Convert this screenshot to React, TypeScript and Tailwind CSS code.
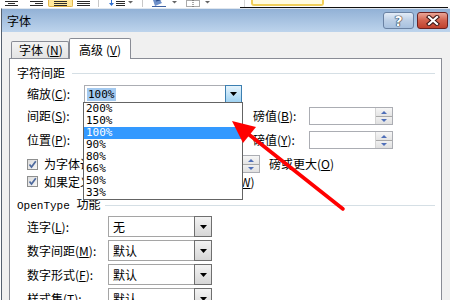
import React from "react";

function Tri({ up, color = "#000", w = 7, h = 4 }: { up?: boolean; color?: string; w?: number; h?: number }) {
  return (
    <svg width={w} height={h} viewBox={`0 0 ${w} ${h}`}>
      {up ? (
        <polygon points={`0,${h} ${w / 2},0 ${w},${h}`} fill={color} />
      ) : (
        <polygon points={`0,0 ${w},0 ${w / 2},${h}`} fill={color} />
      )}
    </svg>
  );
}

function LinesIcon({ v }: { v: number }) {
  const rows =
    v === 0
      ? [
          [0, 13],
          [3, 7],
          [0, 13],
        ]
      : v === 1
      ? [
          [0, 13],
          [5, 8],
          [0, 13],
        ]
      : [
          [0, 13],
          [0, 13],
          [0, 13],
        ];
  return (
    <svg width={13} height={7}>
      {rows.map((r, i) => (
        <rect key={i} x={r[0]} y={i * 2 + 1} width={r[1]} height={1} fill="#2b2b2b" />
      ))}
    </svg>
  );
}

function Toolbar() {
  return (
    <>
      <div className="h-[7px] flex items-start bg-white">
        <div className="ml-[5px]">
          <LinesIcon v={0} />
        </div>
        <div className="ml-[12px]">
          <LinesIcon v={1} />
        </div>
        <div className="ml-[5px] w-[25px] h-[7px] border-x border-b border-[#e2b64c] bg-[#ffe89a] rounded-b-[2px] flex justify-center">
          <svg width={13} height={6}>
            <rect x={0} y={1} width={13} height={1} fill="#2b2b2b" />
            <rect x={0} y={3} width={13} height={1} fill="#2b2b2b" />
            <rect x={0} y={5} width={13} height={1} fill="#2b2b2b" />
          </svg>
        </div>
        <div className="ml-[4px]">
          <LinesIcon v={2} />
        </div>
        <div className="ml-[8px] w-[1px] h-[7px] bg-[#c8c8c8]" />
        <div className="ml-[9px]">
          <svg width={26} height={7}>
            <rect x={3} y={0} width={1} height={5} fill="#2f6fd0" />
            <polygon points="1,3 6,3 3.5,6" fill="#2f6fd0" />
            <rect x={8} y={1} width={9} height={1} fill="#2b2b2b" />
            <rect x={8} y={3} width={9} height={1} fill="#2b2b2b" />
            <rect x={8} y={5} width={9} height={1} fill="#2b2b2b" />
            <polygon points="20,1 25,1 22.5,3.5" fill="#666" />
          </svg>
        </div>
        <div className="ml-[8px] w-[1px] h-[7px] bg-[#c8c8c8]" />
        <div className="ml-[7px]">
          <svg width={28} height={7}>
            <path d="M3 0 L10 0 L12 3 L5 6 Z" fill="#6d8fc9" />
            <path d="M6 1 L13 -1" stroke="#2a4c8c" strokeWidth={1.2} />
            <rect x={2} y={6} width={14} height={1} fill="#3c5fa0" />
            <polygon points="22,1 27,1 24.5,3.5" fill="#666" />
          </svg>
        </div>
        <div className="ml-[8px]">
          <svg width={25} height={7}>
            <rect x={0.5} y={0.5} width={13} height={6} fill="none" stroke="#555" strokeDasharray="1 1" />
            <line x1={7} y1={0} x2={7} y2={7} stroke="#555" strokeDasharray="1 1" />
            <polygon points="19,1 24,1 21.5,3.5" fill="#666" />
          </svg>
        </div>
        <div className="ml-[33px] w-[1px] h-[7px] bg-[#d5d5d5]" />
        <div className="ml-[6px] w-[73px] h-[6px] border-x-2 border-b-2 border-[#f0cf5a] bg-[#fffbe0] rounded-b-[3px]" />
      </div>
      <div className="h-[1px] flex">
        <div className="w-[240px]" />
        <div className="w-[208px] bg-[#111]" />
      </div>
    </>
  );
}

function Checkbox() {
  return (
    <div className="w-[11px] h-[11px] border border-[#8e8f8f] bg-gradient-to-br from-[#dcdcdc] to-[#f7f7f7] flex items-center justify-center">
      <svg width={9} height={9} viewBox="0 0 9 9">
        <path d="M1.5 4.5 L3.5 7 L7.8 1.2" fill="none" stroke="#4e6a9e" strokeWidth={1.7} />
      </svg>
    </div>
  );
}

function GrayDrop() {
  return (
    <div className="w-[18px] h-full border border-[#6f6f6f] bg-gradient-to-b from-[#f3f3f3] to-[#d6d6d6] flex items-center justify-center">
      <Tri w={7} h={4} />
    </div>
  );
}

function OTCombo({ text }: { text: string }) {
  return (
    <div className="w-[104px] h-[21px] border border-[#a5a5a5] bg-white flex items-center">
      <span className="flex-1 pl-[4px] leading-[12px]">{text}</span>
      <div className="h-[21px] -my-[1px] -mr-[1px]">
        <GrayDrop />
      </div>
    </div>
  );
}

function Spin({ className }: { className: string }) {
  return (
    <div className={`h-[18px] border border-[#abadb3] bg-white flex ${className}`}>
      <div className="flex-1" />
      <div className="w-[17px] flex flex-col border-l border-[#d3d3d3]">
        <div className="h-[8px] flex items-center justify-center bg-gradient-to-b from-[#f6f6f6] to-[#e4e4e4]">
          <Tri up w={6} h={3} color="#4f6fb8" />
        </div>
        <div className="h-[1px] bg-[#a8a8a8]" />
        <div className="flex-1 flex items-center justify-center bg-gradient-to-b from-[#f0f0f0] to-[#e0e0e0]">
          <Tri w={6} h={3} color="#4f6fb8" />
        </div>
      </div>
    </div>
  );
}

function HiddenCombo() {
  return (
    <div className="w-[158px] h-[18px] border border-[#abadb3] bg-white flex justify-end">
      <GrayDrop />
    </div>
  );
}

function Dialog() {
  return (
    <div className="ml-[1px] w-[449px] border-l border-t border-l-[#55606f] border-t-[#dfe6ee] flex flex-col">
      <div className="h-[23px] bg-gradient-to-b from-[#92b1d6] to-[#bdd4ec] flex items-start">
        <span className="pl-[5px] pt-[6px] text-[12px] leading-[12px] flex-1">字体</span>
        <div className="mt-[3px] w-[31px] h-[17px] rounded-[3px] border border-[#6a82a3] bg-gradient-to-b from-[#e3ecf7] via-[#bccfe6] to-[#a7c1df] flex items-center justify-center">
          <span className="text-white font-bold text-[14px] leading-[14px] font-['DejaVu_Sans',sans-serif] [text-shadow:0_0_1px_#1b2636,0_0_1px_#1b2636,0_0_1px_#1b2636]">?</span>
        </div>
        <div className="mt-[3px] ml-[3px] mr-[2px] w-[31px] h-[17px] rounded-[3px] border border-[#6b2121] bg-gradient-to-b from-[#e9a597] via-[#d2614d] to-[#c0412d] flex items-center justify-center">
          <svg width={14} height={11} viewBox="0 0 14 11">
            <path d="M3 2 L11 9 M11 2 L3 9" stroke="#3a1414" strokeWidth={4.2} strokeLinecap="square" />
            <path d="M3 2 L11 9 M11 2 L3 9" stroke="#ffffff" strokeWidth={2.2} strokeLinecap="square" />
          </svg>
        </div>
      </div>
      <div className="bg-[#f0f0f0] px-[7px] h-[300px]">
        <div className="h-[26px] flex items-end pl-[2px]">
          <div className="w-[58px] h-[17px] border-l border-t border-r border-[#898c95] bg-gradient-to-b from-[#f4f4f4] to-[#e3e3e3] flex items-center pl-[7px] rounded-t-[2px]">
            <span className="leading-[12px]">字体</span>
            <span className="ml-[3px] leading-[12px]">
              (<u>N</u>)
            </span>
          </div>
          <div className="relative z-10 -mb-[1px] w-[62px] h-[21px] border-l border-t border-r border-[#898c95] bg-white flex items-start pt-[5px] pl-[9px] rounded-t-[2px]">
            <span className="leading-[12px]">高级</span>
            <span className="ml-[3px] leading-[12px]">
              (<u>V</u>)
            </span>
          </div>
        </div>
        <div className="w-[433px] h-[260px] border border-[#898c95] bg-white pt-[8px]">
          <div className="flex items-center h-[12px] pl-[7px] pr-[6px]">
            <span className="leading-[12px]">字符间距</span>
            <div className="flex-1 ml-[7px] h-[1px] bg-[#d5dfe5]" />
          </div>
          <div className="flex items-center h-[18px] mt-[6px] pl-[17px]">
            <span className="w-[57px] leading-[12px]">
              缩放(<u>C</u>):
            </span>
            <div className="w-[158px] h-[18px] border border-[#abadb3] bg-white flex items-center">
              <span className="ml-[2px] px-[1px] bg-[#a3c9ef] font-['DejaVu_Sans_Mono',monospace] text-[11px] leading-[13px]">100%</span>
              <div className="flex-1" />
              <div className="w-[17px] h-[18px] -my-[1px] -mr-[1px] border border-[#3c7fb1] bg-gradient-to-b from-[#e6f4fc] to-[#9fd2f2] flex items-center justify-center">
                <Tri w={7} h={4} />
              </div>
            </div>
          </div>
          <div className="flex items-center h-[18px] mt-[4px] pl-[17px]">
            <span className="w-[57px] leading-[12px]">
              间距(<u>S</u>):
            </span>
            <HiddenCombo />
            <span className="ml-[11px] w-[56px] leading-[12px]">
              磅值(<u>B</u>):
            </span>
            <Spin className="w-[84px]" />
          </div>
          <div className="flex items-center h-[18px] mt-[6px] pl-[17px]">
            <span className="w-[57px] leading-[12px]">
              位置(<u>P</u>):
            </span>
            <HiddenCombo />
            <span className="ml-[11px] w-[56px] leading-[12px]">
              磅值(<u>Y</u>):
            </span>
            <Spin className="w-[84px]" />
          </div>
          <div className="flex items-center h-[18px] mt-[6px] pl-[17px]">
            <Checkbox />
            <span className="ml-[6px] w-[156px] leading-[12px] whitespace-nowrap overflow-hidden">
              为字体调整字间距(<u>K</u>):
            </span>
            <Spin className="w-[60px]" />
            <span className="ml-[9px] leading-[12px]">
              磅或更大(<u>O</u>)
            </span>
          </div>
          <div className="flex items-center h-[13px] mt-[2px] pl-[17px]">
            <Checkbox />
            <span className="ml-[6px] leading-[12px] whitespace-nowrap">
              如果定义了文档网格，则对齐到网格(<u>W</u>)
            </span>
          </div>
          <div className="flex items-center h-[12px] mt-[11px] pl-[7px] pr-[6px]">
            <span className="leading-[12px] whitespace-nowrap">
              <span className="font-['Liberation_Mono',monospace] text-[11px]">OpenType </span>功能
            </span>
            <div className="flex-1 ml-[5px] h-[1px] bg-[#d5dfe5]" />
          </div>
          {[
            ["连字", "L", "无"],
            ["数字间距", "M", "默认"],
            ["数字形式", "F", "默认"],
            ["样式集", "T", "默认"],
          ].map((r, i) => (
            <div
              key={r[0]}
              className={`flex items-center h-[21px] pl-[17px] ${i === 0 ? "mt-[5px]" : "mt-[3px]"}`}
            >
              <span className="w-[81px] leading-[12px]">
                {r[0]}(<u>{r[1]}</u>):
              </span>
              <OTCombo text={r[2]} />
            </div>
          ))}
        </div>
      </div>
    </div>
  );
}

function DropList() {
  const items = ["200%", "150%", "100%", "90%", "80%", "66%", "50%", "33%"];
  return (
    <div className="absolute left-[83px] top-[102px] w-[160px] h-[98px] border border-[#646464] bg-white font-['DejaVu_Sans_Mono',monospace] text-[11px]">
      {items.map((t) => (
        <div
          key={t}
          className={`h-[12px] leading-[12px] pl-[2px] ${t === "100%" ? "bg-[#3399ff] text-white" : "text-black"}`}
        >
          {t}
        </div>
      ))}
    </div>
  );
}

function Arrow() {
  return (
    <svg className="absolute left-0 top-0 pointer-events-none" width={450} height={300}>
      <line x1={343} y1={209} x2={247} y2={133} stroke="#ff0000" strokeWidth={3.6} strokeLinecap="round" />
      <polygon points="232,121 256,127 243,143" fill="#ff0000" />
    </svg>
  );
}

export default function App() {
  return (
    <div className="relative w-[450px] h-[300px] overflow-hidden bg-white font-['Noto_Sans_CJK_SC',sans-serif] text-[12px] leading-[12px] text-black">
      <Toolbar />
      <Dialog />
      <DropList />
      <Arrow />
    </div>
  );
}
